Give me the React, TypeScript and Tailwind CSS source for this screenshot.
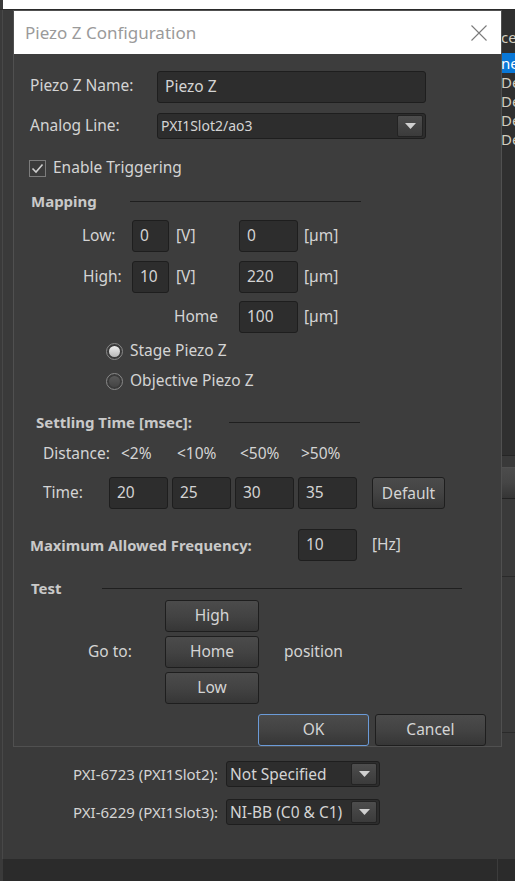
import React from "react";

function Field({ className, value }: { className: string; value: string }) {
  return (
    <div
      className={
        "h-[32px] shrink-0 rounded-[3px] border border-[#1e1e1e] bg-[#2d2d2d] pl-[7px] pt-[4px] text-[15.5px] leading-[20px] text-[#d4d4d4] " +
        className
      }
    >
      {value}
    </div>
  );
}

function Btn({ className, label }: { className: string; label: string }) {
  return (
    <div
      className={
        "flex shrink-0 items-center justify-center rounded-[3px] border border-[#1e1e1e] bg-gradient-to-b from-[#4b4b4b] via-[#434343] to-[#363636] text-[15.5px] text-[#d4d4d4] " +
        className
      }
    >
      {label}
    </div>
  );
}

function DropArrow() {
  return (
    <div className="flex h-[22px] w-[26px] items-center justify-center rounded-[2px] border border-[#232323] bg-gradient-to-b from-[#4d4d4d] to-[#3b3b3b]">
      <svg width="11" height="6" viewBox="0 0 11 6">
        <path d="M0 0h11L5.5 6z" fill="#d0d0d0" />
      </svg>
    </div>
  );
}

function Select({ className, value, text }: { className: string; value: string; text: string }) {
  return (
    <div
      className={
        "flex h-[26px] shrink-0 items-center justify-between rounded-[3px] border border-[#1e1e1e] bg-[#2d2d2d] pl-[3px] pr-[2px] leading-[20px] text-[#d4d4d4] " +
        className
      }
    >
      <span className={text}>{value}</span>
      <DropArrow />
    </div>
  );
}

function Heading({ label, w, lineW }: { label: string; w: string; lineW: string }) {
  return (
    <div className="flex h-[20px] items-center">
      <span className={"shrink-0 text-[15px] font-bold text-[#c9c9c9] " + w}>{label}</span>
      <div className={"h-px bg-[#1f1f1f] " + lineW} />
    </div>
  );
}

function Radio({ on, label }: { on: boolean; label: string }) {
  return (
    <div className="flex h-[20px] items-center pl-[92px]">
      <div className="flex h-[17px] w-[17px] items-center justify-center rounded-full border border-[#8a8a8a] bg-[#3a3a3a]">
        <div
          className={
            on
              ? "h-[11px] w-[11px] rounded-full bg-gradient-to-b from-[#f0f0f0] to-[#b8b8b8]"
              : "h-[11px] w-[11px] rounded-full bg-gradient-to-b from-[#5a5a5a] to-[#444444]"
          }
        />
      </div>
      <span className="ml-[7px] text-[15.5px] text-[#d4d4d4]">{label}</span>
    </div>
  );
}

function Dialog() {
  return (
    <div className="absolute left-[13px] top-[10px] flex h-[737px] w-[489px] flex-col border border-[#505050] bg-[#3d3d3d]">
      <div className="flex h-[43px] shrink-0 items-center justify-between bg-white pl-[11px] pr-[14px]">
        <span className="text-[17px] text-[#9a9a9a]">Piezo Z Configuration</span>
        <svg width="16" height="16" viewBox="0 0 16 16">
          <path d="M0.5 0.5L15.5 15.5M15.5 0.5L0.5 15.5" stroke="#7a7a7a" strokeWidth="1.1" />
        </svg>
      </div>
      <div className="flex flex-col text-[15.5px] text-[#d4d4d4]">
        <div className="mt-[17px] flex h-[32px] items-center">
          <span className="w-[143px] pb-[3px] pl-[16px]">Piezo Z Name:</span>
          <Field className="w-[269px] pl-[7px]" value="Piezo Z" />
        </div>
        <div className="mt-[10px] flex h-[26px] items-center">
          <span className="w-[143px] pl-[16px]">Analog Line:</span>
          <Select className="w-[269px]" value="PXI1Slot2/ao3" text="text-[14px]" />
        </div>
        <div className="mt-[19px] flex h-[20px] items-center pl-[15px]">
          <div className="flex h-[17px] w-[17px] items-center justify-center border border-[#7c7c7c] bg-[#3b3b3b]">
            <svg width="13" height="11" viewBox="0 0 13 11">
              <path d="M1.5 5.5L5 9L11.5 1.5" stroke="#cfcfcf" strokeWidth="1.6" fill="none" />
            </svg>
          </div>
          <span className="ml-[7px]">Enable Triggering</span>
        </div>
        <div className="mt-[13px] pl-[17px]">
          <Heading label="Mapping" w="w-[99px]" lineW="w-[231px]" />
        </div>
        <div className="mt-[9px] flex h-[32px] items-center">
          <span className="w-[118px] pl-[68px]">Low:</span>
          <Field className="w-[37px]" value="0" />
          <span className="w-[70px] pl-[7px]">[V]</span>
          <Field className="w-[59px]" value="0" />
          <span className="pl-[6px]">[µm]</span>
        </div>
        <div className="mt-[9px] flex h-[32px] items-center">
          <span className="w-[118px] pl-[69px]">High:</span>
          <Field className="w-[37px]" value="10" />
          <span className="w-[70px] pl-[7px]">[V]</span>
          <Field className="w-[59px]" value="220" />
          <span className="pl-[6px]">[µm]</span>
        </div>
        <div className="mt-[8px] flex h-[32px] items-center">
          <span className="w-[225px] pl-[160px]">Home</span>
          <Field className="w-[59px]" value="100" />
          <span className="pl-[6px]">[µm]</span>
        </div>
        <div className="mt-[8px]">
          <Radio on={true} label="Stage Piezo Z" />
        </div>
        <div className="mt-[10px]">
          <Radio on={false} label="Objective Piezo Z" />
        </div>
        <div className="mt-[21px] pl-[22px]">
          <Heading label="Settling Time [msec]:" w="w-[193px]" lineW="w-[131px]" />
        </div>
        <div className="mt-[12px] flex h-[20px] items-center">
          <span className="w-[107px] pl-[29px]">Distance:</span>
          <span className="w-[56px]">&lt;2%</span>
          <span className="w-[63px]">&lt;10%</span>
          <span className="w-[61px]">&lt;50%</span>
          <span>&gt;50%</span>
        </div>
        <div className="mt-[13px] flex h-[32px] items-center">
          <span className="w-[95px] pl-[29px]">Time:</span>
          <div className="flex gap-[4px]">
            <Field className="w-[59px]" value="20" />
            <Field className="w-[59px]" value="25" />
            <Field className="w-[59px]" value="30" />
            <Field className="w-[59px]" value="35" />
          </div>
          <Btn className="ml-[15px] h-[32px] w-[73px] pt-[2px]" label="Default" />
        </div>
        <div className="mt-[20px] flex h-[32px] items-center">
          <span className="w-[284px] pl-[16px] text-[14.8px] font-bold text-[#c9c9c9]">Maximum Allowed Frequency:</span>
          <Field className="w-[59px]" value="10" />
          <span className="pl-[15px]">[Hz]</span>
        </div>
        <div className="mt-[17px] pl-[17px]">
          <Heading label="Test" w="w-[71px]" lineW="w-[360px]" />
        </div>
        <div className="mt-[2px] flex h-[104px] items-center">
          <span className="w-[151px] pl-[74px]">Go to:</span>
          <div className="flex flex-col gap-[4px]">
            <Btn className="h-[32px] w-[94px]" label="High" />
            <Btn className="h-[32px] w-[94px]" label="Home" />
            <Btn className="h-[32px] w-[94px]" label="Low" />
          </div>
          <span className="pl-[25px]">position</span>
        </div>
        <div className="mt-[10px] flex h-[32px] justify-end gap-[6px] pr-[15px]">
          <Btn className="h-[32px] w-[111px] border-[#6b9bd8]" label="OK" />
          <Btn className="h-[32px] w-[111px]" label="Cancel" />
        </div>
      </div>
    </div>
  );
}

export default function App() {
  return (
    <div className="relative h-[881px] w-[515px] overflow-hidden bg-[#3a3a3a] font-['Noto_Sans',sans-serif]">
      <div className="flex h-[9px]">
        <div className="w-[3px] bg-[#3a3a3a]" />
        <div className="flex-1 bg-white" />
      </div>
      <div className="h-px bg-[#2a2a2a]" />
      <div className="ml-[2px] flex h-[849px] flex-col border-l border-[#484848]">
        <div className="flex h-[736px] shrink-0">
          <div className="w-[498px] shrink-0" />
          <div className="flex w-[14px] flex-col overflow-hidden whitespace-nowrap text-[15px] text-[#d2cdbf]">
            <div className="h-[43px] bg-[#2f2f2f] pt-[18px] leading-[19px]">ce</div>
            <div className="h-[20px] overflow-hidden bg-[#0a78d7] leading-[20px] text-white">ne:</div>
            <div className="flex h-[382px] flex-col bg-[#2f2f2f]">
              <div className="h-[19px] overflow-hidden leading-[19px]">De</div>
              <div className="h-[19px] overflow-hidden leading-[19px]">De</div>
              <div className="h-[19px] overflow-hidden leading-[19px]">De</div>
              <div className="h-[19px] overflow-hidden leading-[19px]">De</div>
            </div>
            <div className="h-px bg-[#252525]" />
            <div className="h-[11px] bg-[#393939]" />
            <div className="h-px bg-[#505050]" />
            <div className="h-[30px] bg-gradient-to-b from-[#4c4c4c] via-[#454545] to-[#353535]" />
            <div className="h-px bg-[#222]" />
            <div className="h-[77px] bg-[#3a3a3a]" />
            <div className="h-px bg-[#2a2a2a]" />
            <div className="h-[155px] bg-[#3a3a3a]" />
            <div className="h-px bg-[#2a2a2a]" />
          </div>
        </div>
        <div className="flex flex-col gap-[12px] pt-[15px] text-[15px] text-[#d4d4d4]">
          <div className="flex h-[26px] items-center">
            <span className="w-[223px] pl-[70px]">PXI-6723 (PXI1Slot2):</span>
            <Select className="w-[154px]" value="Not Specified" text="text-[15.5px]" />
          </div>
          <div className="flex h-[26px] items-center">
            <span className="w-[223px] pl-[70px]">PXI-6229 (PXI1Slot3):</span>
            <Select className="w-[154px]" value="NI-BB (C0 &amp; C1)" text="text-[15.5px]" />
          </div>
        </div>
      </div>
      <div className="flex h-[22px]">
        <div className="w-[3px] bg-[#3a3a3a]" />
        <div className="w-[494px] bg-[#2b2b2b]" />
        <div className="w-px bg-[#3c3c3c]" />
        <div className="flex-1 bg-[#2b2b2b]" />
      </div>
      <Dialog />
    </div>
  );
}
